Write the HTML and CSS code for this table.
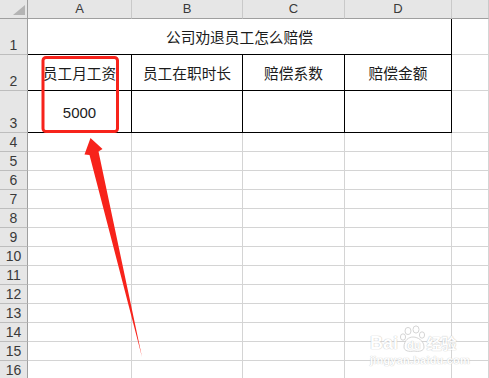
FILE: index.html
```html
<!DOCTYPE html>
<html lang="zh">
<head>
<meta charset="utf-8">
<title>公司劝退员工怎么赔偿</title>
<link rel="stylesheet" href="styles.css">
</head>
<body>
<div class="page">
  <div class="sheet">
    <div class="ch corner"><span class="tri"></span></div>
    <div class="ch">A</div>
    <div class="ch">B</div>
    <div class="ch">C</div>
    <div class="ch">D</div>
    <div class="ch"></div>

    <div class="rh rb">1</div>
    <div class="c title bk-r bk-b">公司劝退员工怎么赔偿</div>
    <div class="c"></div>

    <div class="rh rb">2</div>
    <div class="c t bk-r bk-b">员工月工资</div>
    <div class="c t bk-r bk-b">员工在职时长</div>
    <div class="c t bk-r bk-b">赔偿系数</div>
    <div class="c t bk-r bk-b">赔偿金额</div>
    <div class="c"></div>

    <div class="rh rb">3</div>
    <div class="c t num bk-r bk-b">5000</div>
    <div class="c bk-r bk-b"></div>
    <div class="c bk-r bk-b"></div>
    <div class="c bk-r bk-b"></div>
    <div class="c"></div>

    <div class="rh">4</div><div class="c"></div><div class="c"></div><div class="c"></div><div class="c"></div><div class="c"></div>
    <div class="rh">5</div><div class="c"></div><div class="c"></div><div class="c"></div><div class="c"></div><div class="c"></div>
    <div class="rh">6</div><div class="c"></div><div class="c"></div><div class="c"></div><div class="c"></div><div class="c"></div>
    <div class="rh">7</div><div class="c"></div><div class="c"></div><div class="c"></div><div class="c"></div><div class="c"></div>
    <div class="rh">8</div><div class="c"></div><div class="c"></div><div class="c"></div><div class="c"></div><div class="c"></div>
    <div class="rh">9</div><div class="c"></div><div class="c"></div><div class="c"></div><div class="c"></div><div class="c"></div>
    <div class="rh">10</div><div class="c"></div><div class="c"></div><div class="c"></div><div class="c"></div><div class="c"></div>
    <div class="rh">11</div><div class="c"></div><div class="c"></div><div class="c"></div><div class="c"></div><div class="c"></div>
    <div class="rh">12</div><div class="c"></div><div class="c"></div><div class="c"></div><div class="c"></div><div class="c"></div>
    <div class="rh">13</div><div class="c"></div><div class="c"></div><div class="c"></div><div class="c"></div><div class="c"></div>
    <div class="rh">14</div><div class="c"></div><div class="c"></div><div class="c"></div><div class="c"></div><div class="c"></div>
    <div class="rh">15</div><div class="c"></div><div class="c"></div><div class="c"></div><div class="c"></div><div class="c"></div>
    <div class="rh">16</div><div class="c"></div><div class="c"></div><div class="c"></div><div class="c"></div><div class="c"></div>
  </div>

  <svg class="annot" width="489" height="378" viewBox="0 0 489 378" xmlns="http://www.w3.org/2000/svg">
    <rect x="43" y="57.5" width="74.5" height="74" rx="3" ry="3" fill="none" stroke="#f7231b" stroke-width="3"/>
    <polygon points="90.5,138 102.5,149 98.5,151.5 142,357 89.5,155 84.5,154.5" fill="#f7231b"/>
  </svg>

  <div class="watermark">
    <div class="wm-line">
      <span class="wm-bai">Bai</span>
      <svg class="wm-paw" width="30" height="28" viewBox="0 0 30 28" xmlns="http://www.w3.org/2000/svg">
        <g fill="#fff" stroke="#cfcfcf" stroke-width="1">
          <ellipse cx="9" cy="6" rx="3" ry="3.6"/>
          <ellipse cx="17" cy="4.5" rx="3" ry="3.6"/>
          <ellipse cx="4" cy="12" rx="2.6" ry="3.2"/>
          <ellipse cx="23" cy="10" rx="2.6" ry="3.2"/>
          <path d="M5 22 C5 15 10 12 14 12 C19 12 25 16 25 22 C25 26 20 27 15 26 C10 27 5 26 5 22 Z"/>
        </g>
      </svg>
      <span class="wm-du">du</span>
      <span class="wm-jy">经验</span>
    </div>
    <div class="wm-url">jingyan.baidu.com</div>
  </div>
</div>
</body>
</html>
```

FILE: styles.css
```css
html, body {
  margin: 0;
  padding: 0;
  background: #ffffff;
}

.page {
  position: relative;
  width: 489px;
  height: 378px;
  overflow: hidden;
}

.sheet {
  display: grid;
  grid-template-columns: 28px 104px 111px 102px 107px 1fr;
  grid-template-rows: 19px 36px 36px 42px repeat(13, 19px);
  width: 489px;
}

.sheet > div {
  box-sizing: border-box;
  min-width: 0;
}

.c {
  border-right: 1px solid #d4d4d4;
  border-bottom: 1px solid #d4d4d4;
  background: #ffffff;
}

.ch {
  background: #e6e6e6;
  border-right: 1px solid #c9c9c9;
  border-bottom: 1px solid #9f9f9f;
  font-family: "Liberation Sans", Arial, sans-serif;
  font-size: 13px;
  line-height: 18px;
  color: #3a3a3a;
  text-align: center;
}

.corner {
  position: relative;
  border-right-color: #9f9f9f;
}

.tri {
  position: absolute;
  right: 2px;
  bottom: 3px;
  width: 0;
  height: 0;
  border-left: 12px solid transparent;
  border-bottom: 10px solid #b4b4b4;
}

.rh {
  background: #e6e6e6;
  border-right: 1px solid #9f9f9f;
  border-bottom: 1px solid #bdbdbd;
  font-family: "Liberation Sans", Arial, sans-serif;
  font-size: 14px;
  color: #3a3a3a;
  display: flex;
  align-items: center;
  justify-content: center;
}

.rb {
  align-items: flex-end;
  padding-bottom: 1px;
  line-height: 16px;
}

.title {
  grid-column: span 4;
}

.title, .t {
  display: flex;
  align-items: center;
  justify-content: center;
  font-family: "Noto Sans CJK SC", "Liberation Sans", sans-serif;
  font-size: 14.7px;
  color: #1c1c1c;
}

.num {
  font-family: "Liberation Sans", Arial, sans-serif;
  font-size: 15px;
  padding-top: 2px;
}

.bk-r {
  border-right-color: #000000;
}

.bk-b {
  border-bottom-color: #000000;
}

.annot {
  position: absolute;
  left: 0;
  top: 0;
  pointer-events: none;
}

.watermark {
  position: absolute;
  left: 370px;
  top: 323px;
  width: 96px;
  opacity: 0.85;
}

.wm-line {
  display: flex;
  align-items: flex-end;
  height: 28px;
}

.wm-bai, .wm-du, .wm-jy {
  font-family: "Liberation Sans", Arial, sans-serif;
  font-weight: bold;
  color: #ffffff;
  text-shadow: 0 0 1px #b8b8b8, 0 0 1px #c8c8c8;
  line-height: 16px;
}

.wm-bai {
  font-size: 18px;
}

.wm-du {
  font-size: 11px;
  margin-left: -22px;
  margin-right: 10px;
  line-height: 12px;
  color: #ffffff;
}

.wm-paw {
  margin-left: 1px;
  margin-bottom: -2px;
}

.wm-jy {
  font-family: "Noto Sans CJK SC", sans-serif;
  font-size: 15px;
  font-weight: bold;
  margin-left: -4px;
}

.wm-url {
  font-family: "Liberation Sans", Arial, sans-serif;
  font-weight: bold;
  font-size: 11px;
  line-height: 12px;
  margin-top: 3px;
  color: #ffffff;
  text-shadow: 0 0 1px #c0c0c0, 0 0 1px #d0d0d0;
  letter-spacing: 0.2px;
}
```
